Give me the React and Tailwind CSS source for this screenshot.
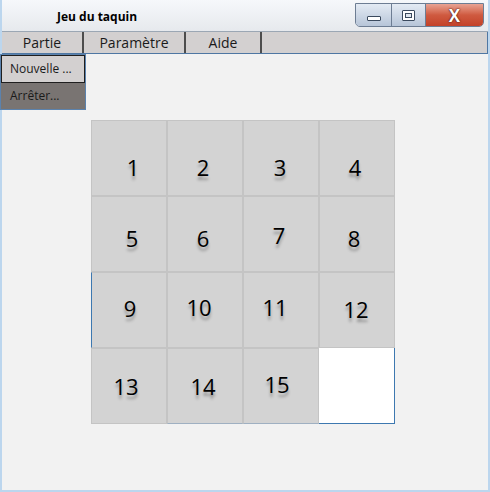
import React from 'react';

const tiles = [
  { n: '1', off: 'translate-x-[4px] translate-y-[9px]' },
  { n: '2', off: 'translate-x-[-2px] translate-y-[9px]' },
  { n: '3', off: 'translate-x-[-1px] translate-y-[9px]' },
  { n: '4', off: 'translate-x-[-2px] translate-y-[9px]' },
  { n: '5', off: 'translate-x-[3px] translate-y-[4px]' },
  { n: '6', off: 'translate-x-[-2px] translate-y-[4px]' },
  { n: '7', off: 'translate-x-[-2px] translate-y-[1px]' },
  { n: '8', off: 'translate-x-[-3px] translate-y-[4px]' },
  { n: '9', off: 'translate-x-[1px] translate-y-[-2px]', edge: 'border-l-[#3d78b0]' },
  { n: '10', off: 'translate-x-[-6px] translate-y-[-3px]' },
  { n: '11', off: 'translate-x-[-6px] translate-y-[-3px]' },
  { n: '12', off: 'translate-x-[-1px] translate-y-[-1px]' },
  { n: '13', off: 'translate-x-[-3px] translate-y-[0px]' },
  { n: '14', off: 'translate-x-[-2px] translate-y-[0px]', edge: 'border-b-[#9fb0c2]' },
  { n: '15', off: 'translate-x-[-4px] translate-y-[-2px]', edge: 'border-b-[#9fb0c2]' },
];

function Tile({ n, off, edge = '' }) {
  return (
    <div className={`flex h-[76px] w-[76px] items-center justify-center border border-[#c4c4c4] bg-[#d3d3d3] ${edge}`}>
      <span className={`text-[22px] leading-none text-black [text-shadow:0_4px_3px_rgba(0,0,0,0.3)] ${off}`}>{n}</span>
    </div>
  );
}

export default function App() {
  return (
    <div className="relative flex h-[492px] w-[490px] flex-col border-x-2 border-b-2 border-[#bcd6ee] bg-[#f2f2f2] font-['Open_Sans','Noto_Sans',sans-serif]">
      {/* Title bar */}
      <div className="flex h-[32px] items-start border-b border-[#9ba7b4] bg-gradient-to-b from-[#f6f8fb] to-[#e6e9ed]">
        <span className="ml-[55px] mt-[8px] text-[12px] font-bold text-black">Jeu du taquin</span>
        <div className="ml-auto mr-[4px] mt-[3px] flex h-[24px] overflow-hidden rounded-b-[5px] border border-[#6d7d93]">
          <div className="flex w-[36px] items-center justify-center border-r border-[#6d7d93] bg-gradient-to-b from-[#e4ebf4] to-[#b7c5d8]">
            <div className="mt-[6px] h-[5px] w-[14px] rounded-[1px] border border-[#3b4a5e] bg-white" />
          </div>
          <div className="flex w-[34px] items-center justify-center border-r border-[#6d7d93] bg-gradient-to-b from-[#e4ebf4] to-[#b7c5d8]">
            <div className="flex h-[11px] w-[13px] items-center justify-center rounded-[1px] border border-[#3b4a5e] bg-white">
              <div className="h-[5px] w-[7px] border border-[#3b4a5e] bg-[#dfe6ee]" />
            </div>
          </div>
          <div className="flex w-[57px] items-center justify-center bg-gradient-to-b from-[#e8a393] via-[#cf5a40] to-[#c34128]">
            <span className="text-[17px] font-bold leading-none text-white [text-shadow:0_0_2px_#4a140c,0_0_1px_#4a140c]">X</span>
          </div>
        </div>
      </div>

      {/* Menu bar */}
      <div className="flex h-[22px] items-stretch border-b border-r border-[#4f77a3] bg-[#d3d0d0] text-[14px] text-[#1a1a1a]">
        <div className="flex w-[82px] items-center justify-center border-r-2 border-[#4d4d4d]">Partie</div>
        <div className="flex w-[102px] items-center justify-center border-r-2 border-[#4d4d4d]">Paramètre</div>
        <div className="flex w-[76px] items-center justify-center border-r-2 border-[#4d4d4d]">Aide</div>
      </div>

      {/* Dropdown */}
      <div className="absolute left-[-2px] top-[54px] w-[86px] border border-[#5b82ad] text-[12px] text-[#1a1a1a]">
        <div className="flex h-[28px] items-center border border-[#1f1f1f] bg-[#d3d0d0] pl-[8px]">Nouvelle ...</div>
        <div className="flex h-[26px] items-center bg-[#797472] pl-[9px]">Arrêter...</div>
      </div>

      {/* Board */}
      <div className="ml-[89px] mt-[66px] grid w-[304px] grid-cols-4">
        {tiles.map(t => (
          <Tile key={t.n} n={t.n} off={t.off} edge={t.edge} />
        ))}
        <div className="h-[76px] w-[76px] border-b border-r border-[#3d78b0] bg-white" />
      </div>
    </div>
  );
}
